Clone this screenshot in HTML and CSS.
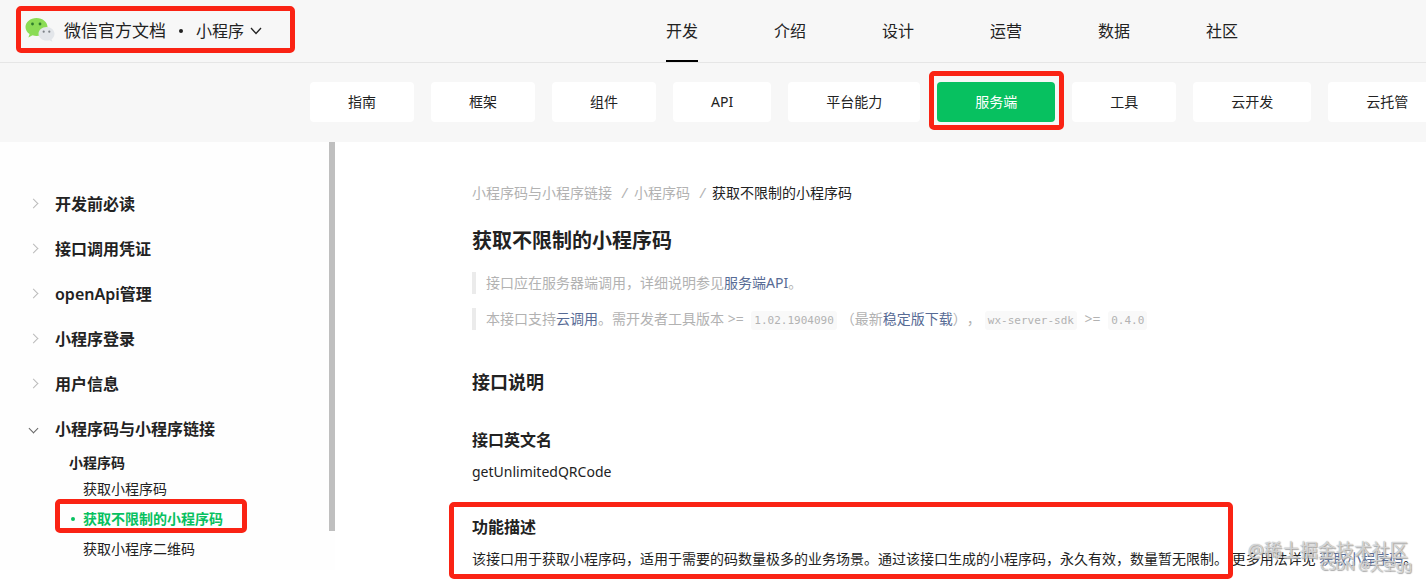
FILE: index.html
```html
<!DOCTYPE html>
<html lang="zh-CN">
<head>
  <meta charset="UTF-8">
  <meta name="viewport" content="width=device-width, initial-scale=1.0">
  <title>获取不限制的小程序码 | 微信官方文档</title>
  <link rel="stylesheet" href="styles.css">
</head>
<body>
<header class="header">
  <div class="brand marked">
    <svg class="logo" width="30" height="26" viewBox="0 0 30 26" aria-hidden="true">
      <path fill="#8bdc55" d="M11.500 1C5.400 1 0.500 5 0.500 10c0 2.900 1.600 5.400 4.100 7.100L3.400 20.500l4.100-2.200c1.300.4 2.600.6 4 .6 6.100 0 11-4 11-8.900S17.600 1 11.500 1z"/>
      <path fill="#e3e6ea" d="M21.500 10c-4.500 0-8 3-8 6.800s3.500 6.800 8 6.800c1 0 2-.2 2.900-.4l3 1.600-.8-2.500c1.800-1.300 2.900-3.300 2.900-5.500 0-3.800-3.500-6.800-8-6.800z"/>
      <circle cx="7.500" cy="7" r="1.400" fill="#2f7d2c"/>
      <circle cx="15" cy="7" r="1.400" fill="#2f7d2c"/>
      <circle cx="18.700" cy="14.700" r="1.100" fill="#7d8288"/>
      <circle cx="24.300" cy="14.700" r="1.100" fill="#7d8288"/>
    </svg>
    <a class="brand-name" href="#">微信官方文档</a>
    <span class="dot"></span>
    <button class="product" type="button">小程序
      <svg width="12" height="8" viewBox="0 0 12 8" fill="none" stroke="#222" stroke-width="1.300" aria-hidden="true"><path d="M1 1l5 5.500L11 1"/></svg>
    </button>
  </div>
  <nav class="nav">
    <a class="active" href="#">开发</a>
    <a href="#">介绍</a>
    <a href="#">设计</a>
    <a href="#">运营</a>
    <a href="#">数据</a>
    <a href="#">社区</a>
  </nav>
</header>

<nav class="tabs">
  <a href="#">指南</a>
  <a href="#">框架</a>
  <a href="#">组件</a>
  <a href="#">API</a>
  <a href="#">平台能力</a>
  <a class="active marked" href="#">服务端</a>
  <a href="#">工具</a>
  <a href="#">云开发</a>
  <a href="#">云托管</a>
</nav>

<div class="page">
  <aside class="sidebar">
    <ul class="menu">
      <li><a class="group" href="#"><span class="arrow"></span>开发前必读</a></li>
      <li><a class="group" href="#"><span class="arrow"></span>接口调用凭证</a></li>
      <li><a class="group" href="#"><span class="arrow"></span>openApi管理</a></li>
      <li><a class="group" href="#"><span class="arrow"></span>小程序登录</a></li>
      <li><a class="group" href="#"><span class="arrow"></span>用户信息</a></li>
      <li>
        <a class="group open" href="#"><span class="arrow"></span>小程序码与小程序链接</a>
        <a class="subgroup" href="#">小程序码</a>
        <ul class="submenu">
          <li><a href="#">获取小程序码</a></li>
          <li><a class="current marked" href="#">获取不限制的小程序码</a></li>
          <li><a href="#">获取小程序二维码</a></li>
        </ul>
      </li>
    </ul>
    <div class="scrollbar"></div>
  </aside>

  <main class="content">
    <div class="breadcrumb">
      <a href="#">小程序码与小程序链接</a><i>/</i><a href="#">小程序码</a><i>/</i><span>获取不限制的小程序码</span>
    </div>
    <h1>获取不限制的小程序码</h1>
    <blockquote>接口应在服务器端调用，详细说明参见<a href="#">服务端API</a>。</blockquote>
    <blockquote>本接口支持<a href="#">云调用</a>。需开发者工具版本 &gt;= <code>1.02.1904090</code>（最新<a href="#">稳定版下载</a>），<code>wx-server-sdk</code> &gt;= <code>0.4.0</code></blockquote>
    <h2>接口说明</h2>
    <h3>接口英文名</h3>
    <p>getUnlimitedQRCode</p>
    <section class="feature marked">
      <h3>功能描述</h3>
      <p>该接口用于获取小程序码，适用于需要的码数量极多的业务场景。通过该接口生成的小程序码，永久有效，数量暂无限制。 更多用法详见 <a href="#">获取小程序码</a>。</p>
    </section>
  </main>
</div>

<div class="watermark">
  <span class="juejin">@稀土掘金技术社区</span>
  <span class="csdn">CSDN @天空gg</span>
</div>
</body>
</html>
```

FILE: styles.css
```css
* { box-sizing: border-box; }
body { margin: 0; min-height: 100vh; position: relative; overflow: hidden; background: #fff; color: #222; font: 14px/22px "Noto Sans", "Noto Sans CJK SC", sans-serif; text-spacing-trim: space-all; }
a { color: inherit; text-decoration: none; }
ul { list-style: none; margin: 0; padding: 0; }

/* red frames */
.marked { position: relative; }
.marked::after { content: ""; position: absolute; box-sizing: border-box; border: 5px solid #fa2314; border-radius: 5px; pointer-events: none; }

.header { display: flex; height: 63px; background: #f7f7f7; border-bottom: 1px solid #e6e6e6; }
.brand { display: flex; align-items: center; width: 642px; padding-left: 25px; flex: none; }
.brand::after { left: 16px; top: 6px; width: 279px; height: 47px; }
.logo { margin-right: 9px; margin-bottom: 2px; }
.brand-name { font-size: 17px; }
.dot { width: 4px; height: 4px; margin: 0 13px; border-radius: 50%; background: #222; }
.product { display: flex; align-items: center; gap: 6px; padding: 0; border: 0; background: none; color: #222; font: inherit; font-size: 16px; cursor: pointer; }
.nav { display: flex; gap: 76px; padding-left: 24px; font-size: 16px; line-height: 62px; white-space: nowrap; }
.nav .active { box-shadow: inset 0 -2px #000; }

.tabs { display: flex; gap: 17px; height: 79px; padding: 19px 0 0 310px; background: #f7f7f7; white-space: nowrap; }
.tabs a { flex: none; height: 40px; padding: 0 38px; border-radius: 4px; background: #fff; line-height: 40px; text-align: center; }
.tabs .active { background: #07c160; color: #fff; }
.tabs .active::after { left: -8px; right: -9px; top: -11px; bottom: -8px; }

.page { display: flex; }
.sidebar { position: relative; flex: none; width: 335px; padding-top: 39px; background: #fefefe; }
.scrollbar { position: absolute; right: 0; top: 0; width: 6px; height: 389px; background: #bfbfbf; }
.group { display: flex; align-items: center; height: 45px; padding-left: 30px; font-size: 16px; font-weight: 600; }
.arrow { width: 7px; height: 7px; margin: 0 18px 0 0; border: solid #bbb; border-width: 1px 1px 0 0; transform: rotate(45deg); }
.open .arrow { border-color: #666; transform: rotate(135deg); }
.subgroup { display: block; margin-top: 1px; padding-left: 69px; font-weight: 600; }
.submenu a { display: block; height: 30px; padding-left: 83px; line-height: 30px; }
.submenu .current { color: #07c160; font-weight: 700; }
.current::before { content: ""; position: absolute; left: 71px; top: 13px; width: 4px; height: 4px; border-radius: 50%; background: #07c160; }
.current::after { left: 55px; top: -5px; width: 192px; height: 34px; }

.content { flex: 1; min-width: 0; padding: 40px 0 0 137px; white-space: nowrap; }
.breadcrumb { color: #b2b2b2; }
.breadcrumb i { margin: 0 7px 0 10px; }
.breadcrumb span { color: #222; }
h1 { margin: 21px 0 15px; font-size: 20px; line-height: 32px; }
h2 { margin: 38px 0 32px; font-size: 18px; line-height: 28px; }
h3 { margin: 0; font-size: 16px; line-height: 24px; font-weight: 600; }
p { margin: 9px 0 0; }
blockquote { margin: 0 0 14px; padding-left: 10px; border-left: 4px solid #ebebeb; color: #b2b2b2; }
blockquote a, p a { color: #576b95; }
code { margin: 0 4px; padding: 3px; border-radius: 3px; background: #f9f9f9; color: #b2b2b2; font: 11px/14px "DejaVu Sans Mono", monospace; }
.feature { margin-top: 32px; }
.feature::after { left: -23px; top: -13px; width: 784px; height: 77px; }

.watermark { position: absolute; right: 14px; bottom: 5px; text-align: right; white-space: nowrap; color: rgba(255, 255, 255, .6); text-shadow: 0 0 1px #888, 1px 1px 1px #aaa; }
.juejin { display: block; margin-right: 4px; font-size: 18px; line-height: 26px; }
.csdn { display: block; margin-top: -8px; font-size: 13px; line-height: 20px; }
```
